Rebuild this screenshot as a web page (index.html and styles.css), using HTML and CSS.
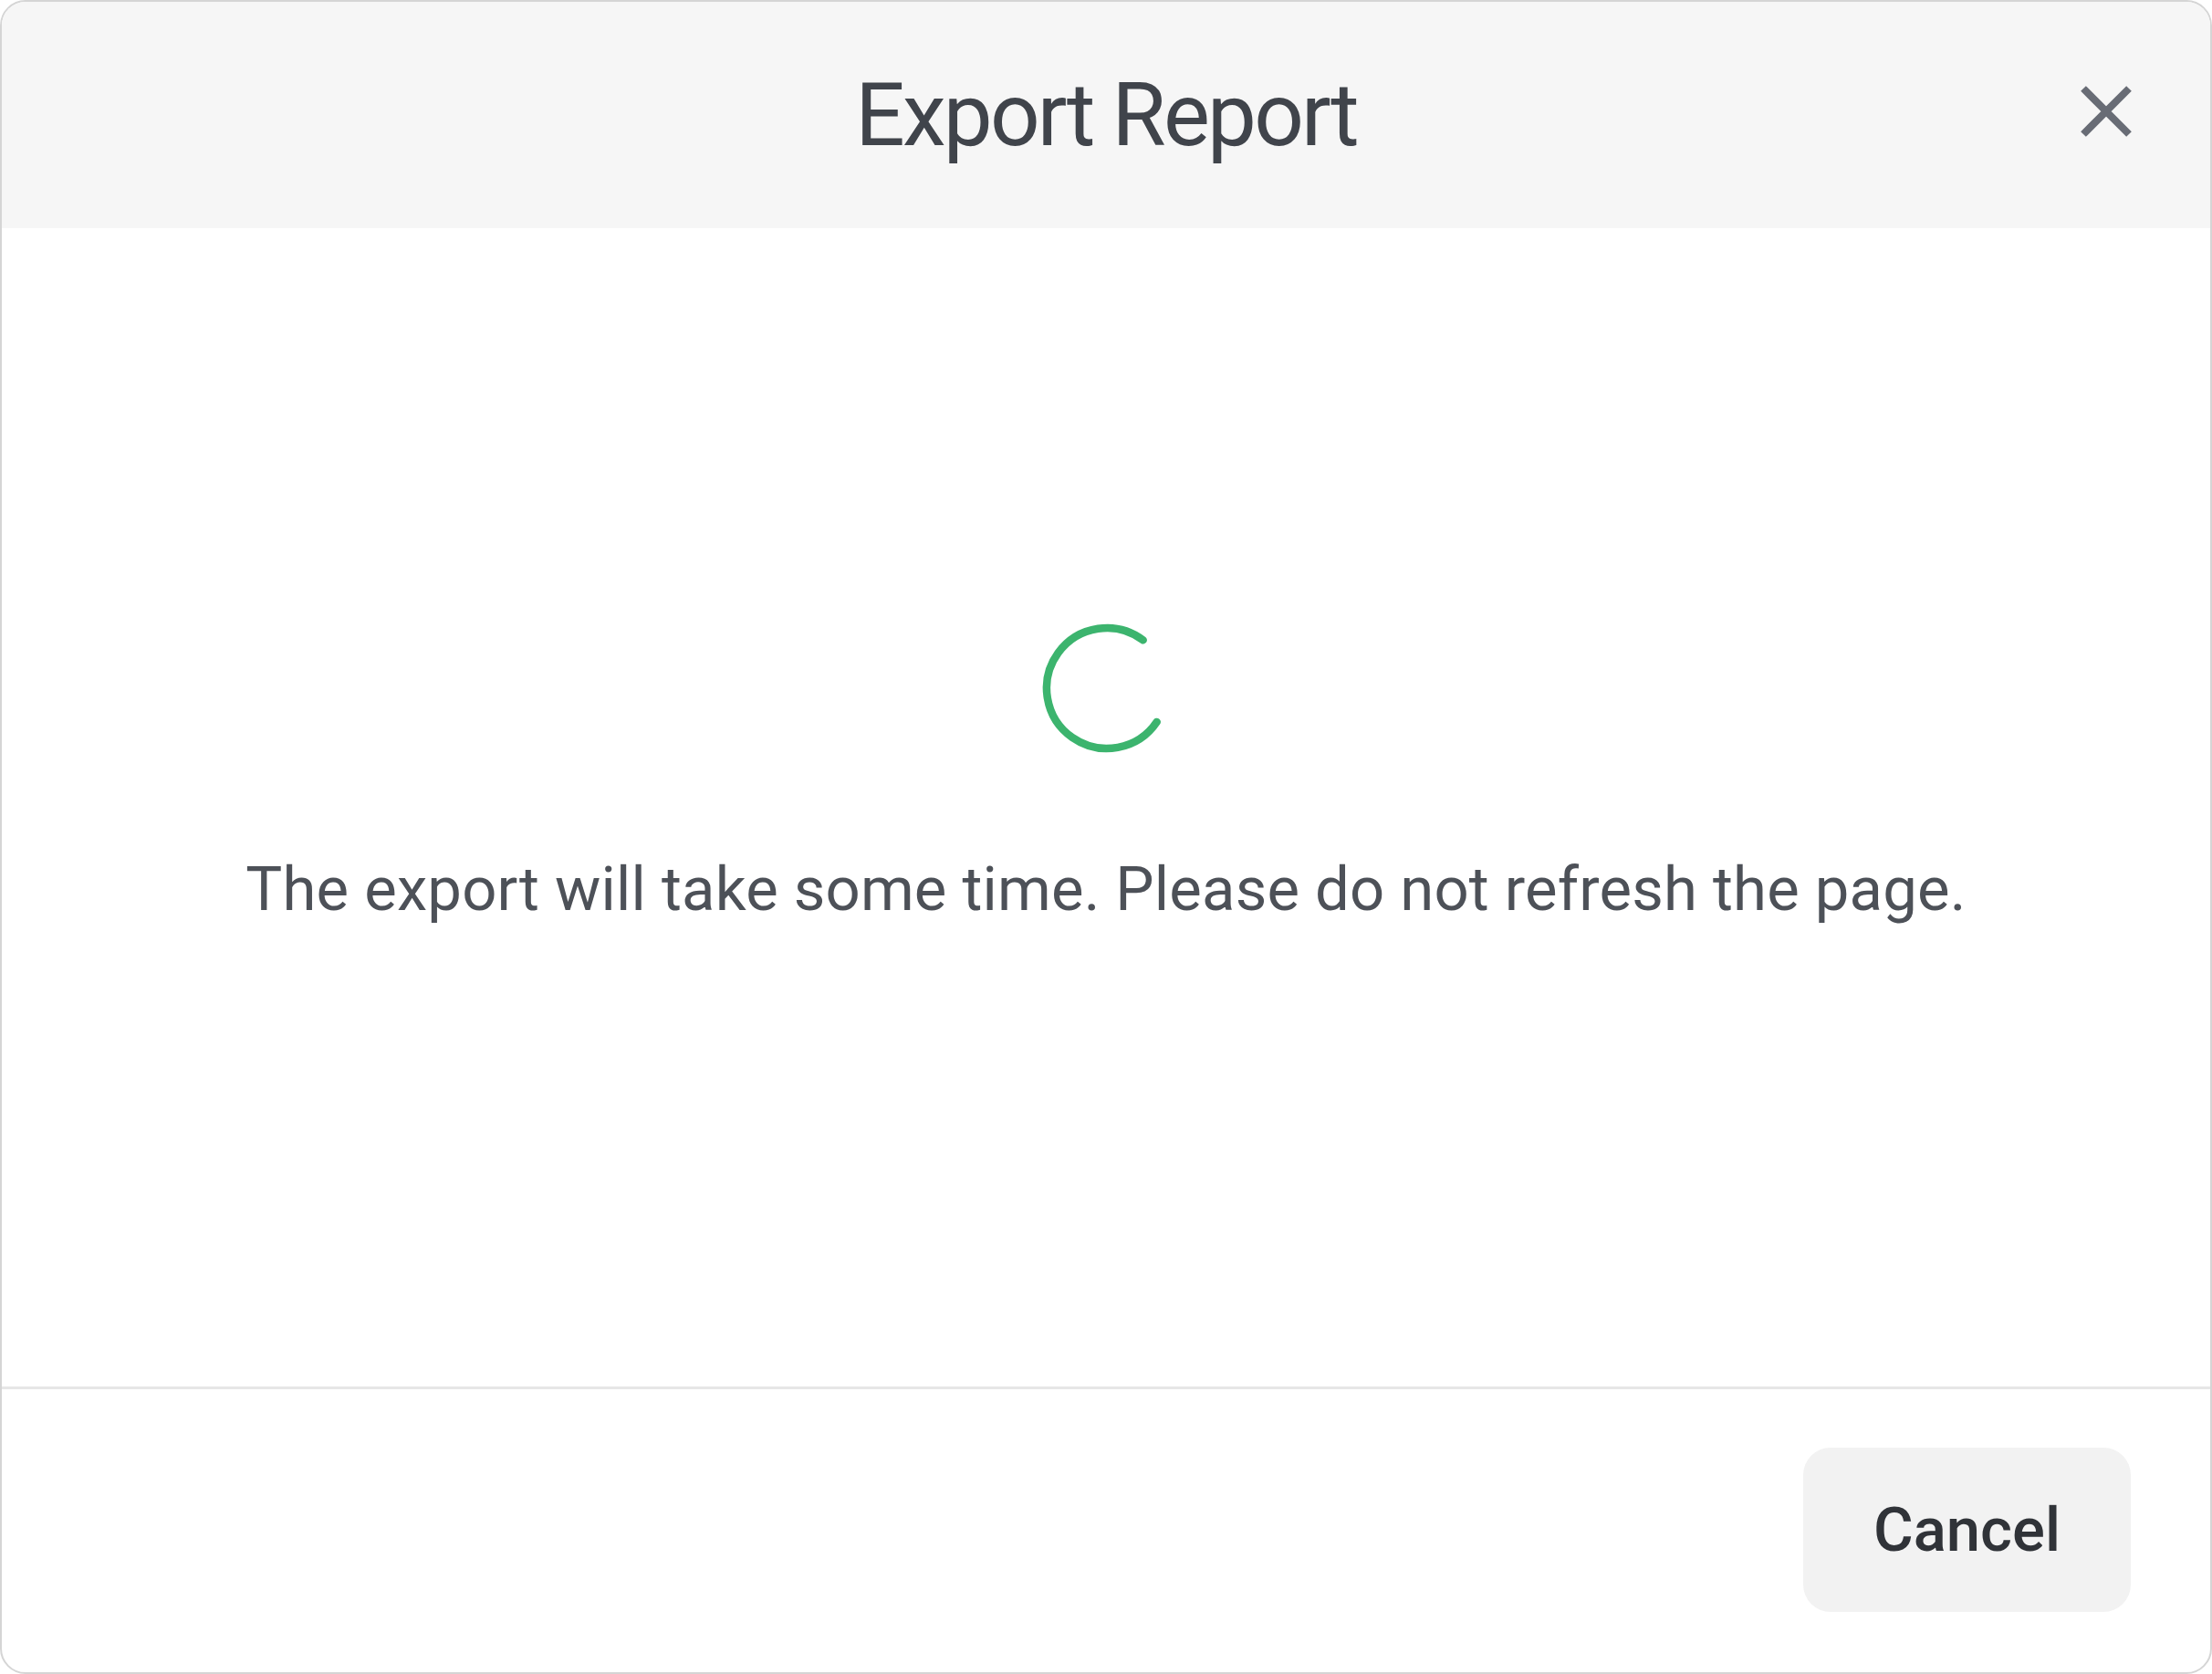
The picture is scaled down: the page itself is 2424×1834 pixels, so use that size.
FILE: index.html
```html
<!DOCTYPE html>
<html lang="en">
<head>
<meta charset="utf-8">
<title>Export Report</title>
<link rel="stylesheet" href="styles.css">
</head>
<body>
<div class="dialog">
  <header class="dialog-header">
    <h1 class="dialog-title">Export Report</h1>
    <button class="close-btn" aria-label="Close">
      <svg width="56" height="56" viewBox="0 0 56 56"><path d="M3 3 L53 53 M53 3 L3 53" stroke="#686c75" stroke-width="8" fill="none"/></svg>
    </button>
  </header>
  <main class="dialog-body">
    <svg class="spinner" width="142" height="142" viewBox="0 0 142 142">
      <path d="M125.7 107.9 A66 66 0 1 1 110.7 18.3" stroke="#3cb46e" stroke-width="8.5" fill="none" stroke-linecap="round"/>
    </svg>
    <p class="message">The export will take some time. Please do not refresh the page.</p>
  </main>
  <footer class="dialog-footer">
    <button class="cancel-btn">Cancel</button>
  </footer>
</div>
</body>
</html>
```
FILE: styles.css
```css
html, body {
  margin: 0;
  padding: 0;
  background: #ffffff;
}
.dialog {
  width: 2424px;
  height: 1834px;
  box-sizing: border-box;
  border: 2px solid #d5d5d5;
  border-radius: 28px;
  overflow: hidden;
  display: flex;
  flex-direction: column;
  background: #ffffff;
  font-family: Roboto, "Liberation Sans", sans-serif;
}
.dialog-header {
  height: 248px;
  flex: 0 0 auto;
  background: #f6f6f6;
  display: flex;
  align-items: center;
  justify-content: center;
  position: relative;
}
.dialog-title {
  margin: 0;
  font-size: 96px;
  font-weight: 400;
  letter-spacing: -2.8px;
  color: #40444b;
  line-height: normal;
}
.close-btn {
  position: absolute;
  right: 86px;
  top: 92px;
  width: 56px;
  height: 56px;
  padding: 0;
  border: 0;
  background: transparent;
  display: block;
}
.close-btn svg {
  display: block;
}
.dialog-body {
  flex: 1 1 auto;
  display: flex;
  flex-direction: column;
  align-items: center;
  padding-top: 433px;
  box-sizing: border-box;
}
.spinner {
  display: block;
  margin-left: 2px;
}
.message {
  margin: 110px 0 0 0;
  font-size: 67px;
  letter-spacing: 0.2px;
  line-height: normal;
  color: #4d5158;
  font-weight: 400;
}
.dialog-footer {
  flex: 0 0 auto;
  height: 313px;
  box-sizing: border-box;
  border-top: 3px solid #e6e6e6;
  display: flex;
  justify-content: flex-end;
  align-items: flex-start;
  padding: 64px 87px 0 0;
}
.cancel-btn {
  width: 359px;
  height: 180px;
  border: 0;
  border-radius: 30px;
  background: #f2f2f2;
  font-family: Roboto, "Liberation Sans", sans-serif;
  font-size: 67px;
  font-weight: 500;
  color: #303338;
  padding: 0;
}
```
